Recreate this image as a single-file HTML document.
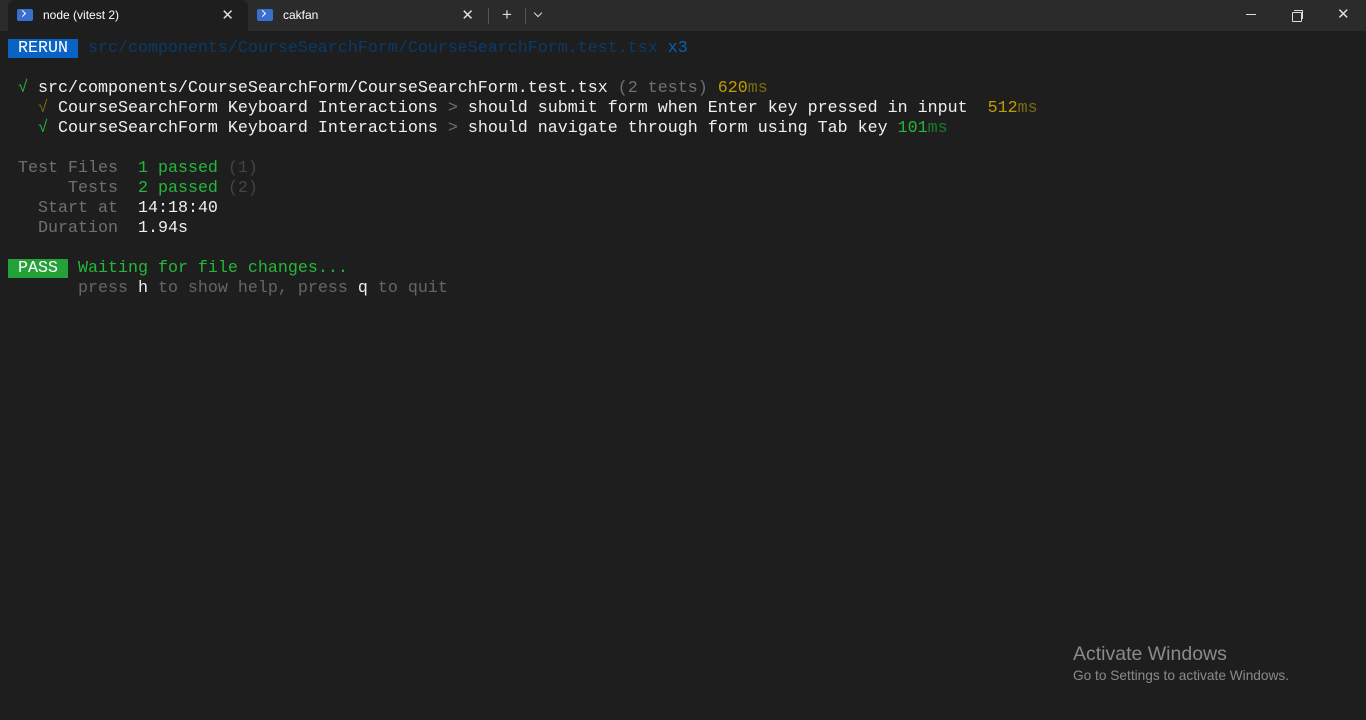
<!DOCTYPE html><html><head><style>
body{margin:0;width:1366px;height:720px;background:#1e1e1e;overflow:hidden;font-family:"Liberation Sans",sans-serif}
.bar{position:absolute;top:0;left:0;width:1366px;height:31px;background:#2b2b2b}
.tab{position:absolute;top:0;height:31px;font-size:12px;color:#fff;line-height:31px}
.t1{left:8px;width:240px;background:#1e1e1e;border-radius:7px 7px 0 0}
.t2{left:248px;width:240px}
.ic{position:absolute;left:9px;top:9px;width:16px;height:12px;background:#3a6fd0;border-radius:2px}
.ic:after{content:"";position:absolute;left:3px;top:2px;width:4px;height:4px;border-right:1.5px solid #fff;border-bottom:1.5px solid #fff;transform:rotate(-45deg)}
.x{position:absolute;right:14px;top:0;font-size:15px;color:#ddd}
.term{position:absolute;top:39px;left:8px;font-family:"Liberation Mono",monospace;font-size:16.67px;line-height:20px;color:#ccc;white-space:pre}
.g{color:#23b83a}.gy{color:#707070}.w{color:#f0f0f0}.y{color:#c19c00}.dy{color:#7a6a10}.dg{color:#1a7a2a}.b{color:#0a3a6a}
</style></head><body>
<div class="bar">
<div class="tab t1"><div class="ic"></div><span style="position:absolute;left:35px">node (vitest 2)</span><span class="x">✕</span></div>
<div class="tab t2"><div class="ic"></div><span style="position:absolute;left:35px">cakfan</span><span class="x">✕</span></div>
<div style="position:absolute;left:488px;top:8px;width:1px;height:16px;background:#555"></div>
<div style="position:absolute;left:502px;top:5px;color:#ddd;font-size:17px">+</div>
<div style="position:absolute;left:525px;top:8px;width:1px;height:16px;background:#555"></div>
<div style="position:absolute;left:535px;top:10px;width:5px;height:5px;border-right:1px solid #ddd;border-bottom:1px solid #ddd;transform:rotate(45deg)"></div>
<div style="position:absolute;left:1246px;top:14px;width:10px;height:1px;background:#ddd"></div>
<div style="position:absolute;left:1292px;top:12px;width:8px;height:8px;border:1px solid #ddd;border-radius:1px"></div>
<div style="position:absolute;left:1294px;top:10px;width:8px;height:8px;border-top:1px solid #ddd;border-right:1px solid #ddd"></div>
<div style="position:absolute;left:1337px;top:5px;color:#ddd;font-size:15px">✕</div>
</div>
<div class="term"><span style="background:#0a63c4;color:#fff"> RERUN </span> <span class="b">src/components/CourseSearchForm/CourseSearchForm.test.tsx</span> <span style="color:#0a5fb8">x3</span>

 <span class="g">√</span> <span class="w">src/components/CourseSearchForm/CourseSearchForm.test.tsx</span> <span class="gy">(2 tests)</span> <span class="y">620</span><span class="dy">ms</span>
   <span class="dy">√</span> <span class="w">CourseSearchForm Keyboard Interactions</span> <span class="gy">&gt;</span> <span class="w">should submit form when Enter key pressed in input</span>  <span class="y">512</span><span class="dy">ms</span>
   <span class="g">√</span> <span class="w">CourseSearchForm Keyboard Interactions</span> <span class="gy">&gt;</span> <span class="w">should navigate through form using Tab key</span> <span class="g">101</span><span class="dg">ms</span>

 <span class="gy">Test Files</span>  <span class="g">1 passed</span> <span style="color:#444">(1)</span>
 <span class="gy">     Tests</span>  <span class="g">2 passed</span> <span style="color:#444">(2)</span>
 <span class="gy">  Start at</span>  <span class="w">14:18:40</span>
 <span class="gy">  Duration</span>  <span class="w">1.94s</span>

<span style="background:#23a23a;color:#fff"> PASS </span> <span class="g">Waiting for file changes...</span>
       <span style="color:#666">press <span class="w">h</span> to show help, press <span class="w">q</span> to quit</span></div>
<div style="position:absolute;left:1073px;top:643px;color:#8a8a8a;font-size:19.5px">Activate Windows</div>
<div style="position:absolute;left:1073px;top:668px;color:#8a8a8a;font-size:13.7px">Go to Settings to activate Windows.</div>
</body></html>
